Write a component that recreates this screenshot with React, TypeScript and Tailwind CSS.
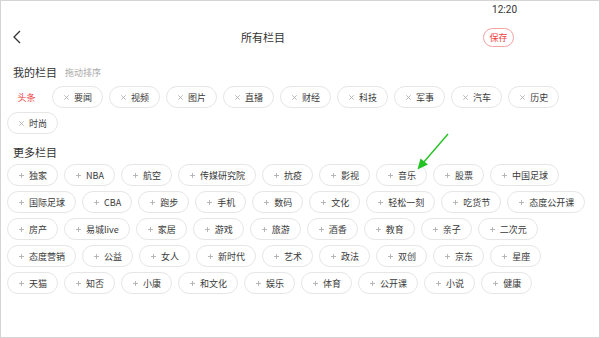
import React from "react";

const MY_ROWS: string[][] = [
  ["要闻", "视频", "图片", "直播", "财经", "科技", "军事", "汽车", "历史"],
  ["时尚"],
];

const MORE_ROWS: string[][] = [
  ["独家", "NBA", "航空", "传媒研究院", "抗疫", "影视", "音乐", "股票", "中国足球"],
  ["国际足球", "CBA", "跑步", "手机", "数码", "文化", "轻松一刻", "吃货节", "态度公开课"],
  ["房产", "易城live", "家居", "游戏", "旅游", "酒香", "教育", "亲子", "二次元"],
  ["态度营销", "公益", "女人", "新时代", "艺术", "政法", "双创", "京东", "星座"],
  ["天猫", "知否", "小康", "和文化", "娱乐", "体育", "公开课", "小说", "健康"],
];

function Chip({ label, mode }: { label: string; mode: "remove" | "add" }) {
  return (
    <div className="h-[22px] flex items-center gap-[5px] pl-[11px] pr-[10px] rounded-full border border-[#e6e6e6] bg-white shrink-0">
      <svg width="5" height="5" viewBox="0 0 5 5" className="shrink-0">
        {mode === "add" ? (
          <path d="M2.5 0V5M0 2.5H5" stroke="#b0b0b0" strokeWidth="0.9" />
        ) : (
          <path d="M0.3 0.3L4.7 4.7M4.7 0.3L0.3 4.7" stroke="#b0b0b0" strokeWidth="0.9" />
        )}
      </svg>
      <span className="text-[9px] leading-none text-[#3a3a3a] whitespace-nowrap">{label}</span>
    </div>
  );
}

export default function App() {
  return (
    <div className="w-[600px] h-[338px] relative overflow-hidden bg-white border border-[#d4d4d4] font-['Noto_Sans_CJK_SC','Noto_Sans',sans-serif]">
      {/* status bar */}
      <div className="h-[17px] flex items-center justify-end pr-[82px]">
        <span className="text-[10px] leading-none text-[#333] font-['Roboto',sans-serif]">12:20</span>
      </div>

      {/* title bar */}
      <div className="h-[38px] flex items-center pl-[12px] pr-[85px]">
        <svg width="8" height="14" viewBox="0 0 8 14" className="shrink-0">
          <path d="M7 1L1 7L7 13" fill="none" stroke="#333" strokeWidth="1.3" />
        </svg>
        <span className="ml-[220px] text-[11px] leading-none text-[#333]">所有栏目</span>
        <button className="ml-auto w-[31px] h-[19px] rounded-full border border-[#f5a3a3] text-[9px] leading-none text-[#f0413f] flex items-center justify-center">
          保存
        </button>
      </div>

      {/* my columns */}
      <div className="mt-[5px] h-[22px] flex items-center gap-[8px] pl-[12px]">
        <span className="text-[11px] leading-none text-[#333]">我的栏目</span>
        <span className="text-[9px] leading-none text-[#aaa]">拖动排序</span>
      </div>
      <div className="mt-[3px] pl-[6px] flex flex-col gap-y-[4px]">
        {MY_ROWS.map((row, i) => (
          <div key={i} className="flex gap-x-[6px]">
            {i === 0 && (
              <div className="h-[22px] w-[39px] flex items-center justify-center shrink-0">
                <span className="text-[9px] leading-none text-[#f0413f]">头条</span>
              </div>
            )}
            {row.map((t) => (
              <Chip key={t} label={t} mode="remove" />
            ))}
          </div>
        ))}
      </div>

      {/* more columns */}
      <div className="mt-[7px] h-[22px] flex items-center pl-[12px]">
        <span className="text-[11px] leading-none text-[#333]">更多栏目</span>
      </div>
      <div className="mt-[1px] pl-[6px] flex flex-col gap-y-[5px]">
        {MORE_ROWS.map((row, i) => (
          <div key={i} className="flex gap-x-[6px]">
            {row.map((t) => (
              <Chip key={t} label={t} mode="add" />
            ))}
          </div>
        ))}
      </div>

      {/* annotation arrow */}
      <svg className="absolute left-0 top-0 pointer-events-none" width="600" height="338" viewBox="0 0 600 338">
        <path d="M447 133L422 162" stroke="#22c322" strokeWidth="1.4" />
        <path d="M416.5 168.5L419.5 157.5L427 163.5Z" fill="#22c322" />
      </svg>
    </div>
  );
}
